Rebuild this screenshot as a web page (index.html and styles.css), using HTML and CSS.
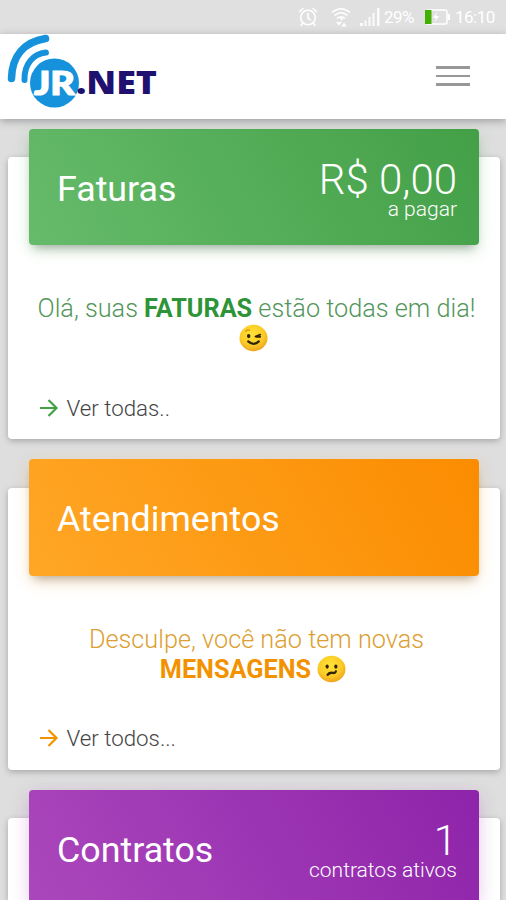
FILE: index.html
```html
<!DOCTYPE html>
<html lang="pt-BR">
<head>
<meta charset="utf-8">
<title>JR.NET</title>
<link rel="stylesheet" href="styles.css">
</head>
<body>
<div class="status">
  <svg class="alarm" width="20" height="20" viewBox="0 0 20 20"><g fill="none" stroke="#fff" stroke-width="1.600" stroke-linecap="round"><circle cx="10" cy="10.500" r="7.300"/><path d="M10 6.500v4.500l2.500 2M1.500 4.500 5 1.500M18.500 4.500 15 1.500M4.500 16.500 3 18.500M15.500 16.500 17 18.500"/></g></svg>
  <svg class="wifi" width="20" height="20" viewBox="0 0 20 20"><g fill="none" stroke="#fff" stroke-width="1.600"><path d="M1 5.500Q10-2 19 5.500M3.500 8.500Q10 3 16.500 8.500M6 11.500Q10 8 14 11.500"/></g><path d="M9 11h3l-1.500 3zM5 15h6l-3 3.500zM10.500 19.500l2.500-4 2.500 4z" fill="#fff"/></svg>
  <svg class="signal" width="20" height="18" viewBox="0 0 20 18"><path d="M0 15h3v3H0zM4.500 12.500h2V18h-2zM8.500 9h2v9h-2zM12.500 5h2v13h-2zM17 0h2.500v18H17z" fill="#fff" opacity=".85"/></svg>
  <span class="percent">29%</span>
  <svg class="battery" width="25" height="16" viewBox="0 0 25 16"><rect x="1" y="1" width="21" height="14" rx="1.500" fill="none" stroke="#fff" stroke-width="1.500"/><path d="M23 5h2v6h-2z" fill="#fff"/><path d="M0 1h6.500v14H0z" fill="#43b000"/><path d="m12 3-4 6h3l-1 4 4-6h-3z" fill="#fff"/></svg>
  <span class="time">16:10</span>
</div>
<header class="navbar">
  <svg class="logo" width="160" height="84" viewBox="0 0 160 84">
    <circle cx="54.500" cy="49" r="24.500" fill="#1692dc"/>
    <g fill="none" stroke="#1692dc" stroke-linecap="round"><path d="M11.500 44.500C12 22 24 8 45.500 4.500" stroke-width="7.500"/><path d="M24.500 46C24 30 33 20 46 18.500" stroke-width="6"/></g>
    <text class="logo-jr" x="34" y="61" textLength="41" lengthAdjust="spacingAndGlyphs">JR</text>
    <text class="logo-net" x="76" y="60" textLength="81" lengthAdjust="spacingAndGlyphs">.NET</text>
  </svg>
  <div class="menu"><i></i><i></i><i></i></div>
</header>
<main>
  <section class="card green">
    <div class="card-head"><h2>Faturas</h2><div class="total"><strong>R$ 0,00</strong><span>a pagar</span></div></div>
    <p class="message"><span class="first">Olá, suas <b>FATURAS</b> estão todas em dia!</span><span class="second"><svg class="emoji" width="29" height="28" viewBox="0 0 30 28"><use href="#face"/><g fill="none" stroke="#30230a" stroke-linecap="round"><path d="M9.500 17.500q5.500 5 11 0" stroke-width="2.300"/><path d="m17 12.500 5-2M18 12.800h4" stroke-width="1.800"/><path d="M7 7q2-2 4-1" stroke="#dc9411" stroke-width="1.300"/></g><ellipse cx="10" cy="12" rx="1.800" ry="2.200" fill="#30230a"/></svg></span></p>
    <a class="more"><svg width="20" height="20" viewBox="0 0 20 20"><path d="M1 10h16M9.500 2l8 8-8 8"/></svg><span>Ver todas..</span></a>
  </section>
  <section class="card orange">
    <div class="card-head"><h2>Atendimentos</h2></div>
    <p class="message"><span class="first">Desculpe, você não tem novas</span><span class="second"><b>MENSAGENS</b> <svg class="emoji" width="29" height="28" viewBox="0 0 30 28"><use href="#face"/><path d="M11 20q2-2.500 5-2t3.500-1.500" fill="none" stroke="#30230a" stroke-width="2.400" stroke-linecap="round"/><ellipse cx="10.500" cy="11.500" rx="1.700" ry="2.200" fill="#30230a"/><ellipse cx="19.500" cy="11.500" rx="1.700" ry="2.200" fill="#30230a"/></svg></span></p>
    <a class="more"><svg width="20" height="20" viewBox="0 0 20 20"><path d="M1 10h16M9.500 2l8 8-8 8"/></svg><span>Ver todos...</span></a>
  </section>
  <section class="card purple">
    <div class="card-head"><h2>Contratos</h2><div class="total"><strong>1</strong><span>contratos ativos</span></div></div>
  </section>
</main>
<svg class="defs" width="0" height="0"><defs><radialGradient id="yellow" cx=".45" cy=".35" r=".7"><stop offset="0" stop-color="#ffe238"/><stop offset=".6" stop-color="#fbcb25"/><stop offset="1" stop-color="#ee9b1c"/></radialGradient><ellipse id="face" cx="15" cy="14" rx="14.500" ry="13.700" fill="url(#yellow)"/></defs></svg>
</body>
</html>
```
FILE: styles.css
```css
* { box-sizing: border-box; }
body { margin: 0; height: 900px; overflow: hidden; background: #dedede; font-family: Roboto, sans-serif; font-weight: 300; }
.status { height: 34px; background: #e0e0e0; color: #fff; display: flex; align-items: center; padding-left: 298px; font-size: 17px; font-weight: 400; white-space: nowrap; }
.wifi { margin-left: 13px; }
.signal { margin-left: 9px; }
.percent { width: 31px; margin-left: 4px; letter-spacing: -.5px; }
.battery { margin-left: 10px; }
.time { margin-left: 5px; letter-spacing: -.5px; }
.navbar { position: relative; height: 84.500px; background: #fff; display: flex; justify-content: space-between; box-shadow: 0 2px 8px rgba(60, 60, 70, .4); }
.logo-net { font-family: "Open Sans", sans-serif; font-weight: 800; font-size: 31.500px; fill: #20106f; }
.logo-jr { font-family: Lato, sans-serif; font-weight: 900; font-size: 33px; fill: #fff; stroke: #fff; stroke-width: 1.200px; }
.menu { width: 34px; margin: 32px 36px 0 0; display: grid; gap: 6px; align-content: start; }
.menu i { height: 2.500px; background: #989898; }
main { padding: 38.500px 6.500px 0 7.500px; display: grid; gap: 48.500px; }
.card { height: 282px; padding: 0 21px; background: #fff; border-radius: 4px; box-shadow: 0 2px 6px rgba(0, 0, 0, .25); }
.purple { height: 82px; border-radius: 4px 4px 0 0; }
.card-head { height: 116.500px; margin-top: -28.500px; padding: 0 21.500px 0 28.500px; border-radius: 4px; display: flex; justify-content: space-between; color: #fff; }
.green .card-head { background: linear-gradient(60deg, #66bb6a, #43a047); box-shadow: 0 5px 18px rgba(76, 175, 80, .2), 0 7px 10px -5px rgba(0, 0, 0, .35); }
.orange .card-head { background: linear-gradient(60deg, #ffa726, #fb8c00); box-shadow: 0 5px 18px rgba(255, 152, 0, .2), 0 7px 10px -5px rgba(0, 0, 0, .35); }
.purple .card-head { height: 110px; border-radius: 4px 4px 0 0; background: linear-gradient(60deg, #ab47bc, #8e24aa); box-shadow: 0 5px 18px rgba(156, 39, 176, .25); }
h2 { margin: 0; height: 100%; font-size: 35.800px; font-weight: 400; line-height: 121px; overflow: hidden; }
.total { text-align: right; padding-top: 31px; }
.total strong { display: block; font-size: 42px; line-height: 40px; font-weight: 300; }
.total span { display: block; font-size: 21px; line-height: 20px; margin-top: -1px; }
.message { margin: 49px -20px 0; text-align: center; font-size: 25.280px; line-height: 30px; height: 60px; white-space: nowrap; }
.message span { display: block; height: 30px; }
.message b { font-weight: 700; }
.first { padding-left: 6px; }
.second { padding-right: 1px; }
.green .message { color: #52965b; }
.green .message b { color: #2d9438; }
.orange .message { color: #dca032; }
.orange .message b { color: #f39200; }
.emoji { display: inline-block; vertical-align: -5px; }
.more { display: flex; align-items: center; height: 30px; margin-top: 38.500px; padding-left: 10px; gap: 8px; color: #444; font-size: 22.300px; }
.more path { fill: none; stroke-width: 2.200; }
.green .more path { stroke: #43a047; }
.orange .more path { stroke: #f39200; }
.defs { position: absolute; }
```
